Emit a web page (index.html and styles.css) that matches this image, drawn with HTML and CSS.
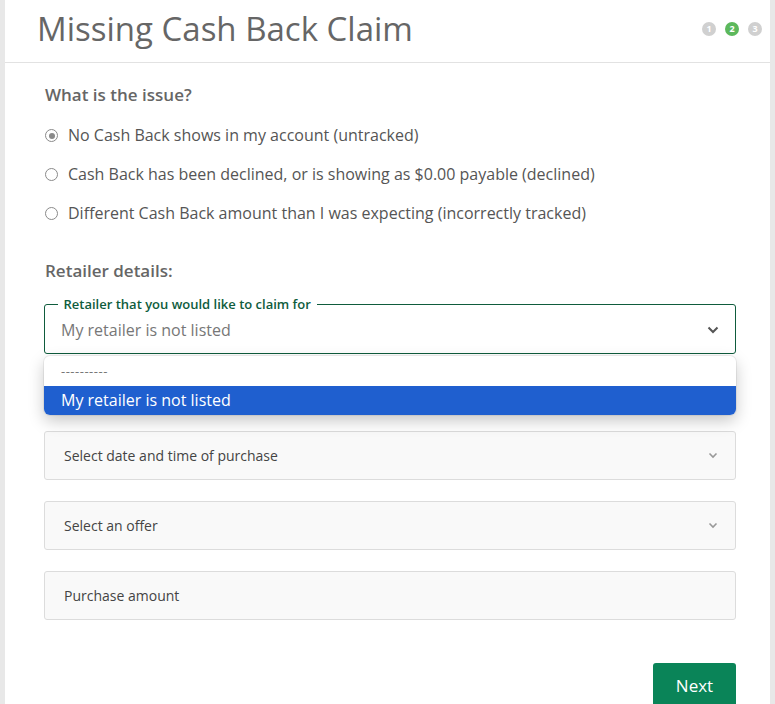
FILE: index.html
```html
<!DOCTYPE html>
<html lang="en">
<head>
  <meta charset="UTF-8" />
  <title>Missing Cash Back Claim</title>
  <link rel="stylesheet" href="styles.css">
</head>
<body>
  <div class="card">
    <header class="head">
      <h1>Missing Cash Back Claim</h1>
      <div class="steps">
        <span class="step">1</span>
        <span class="step active">2</span>
        <span class="step">3</span>
      </div>
    </header>

    <main class="body">
      <h2>What is the issue?</h2>
      <div class="radios">
        <label class="radio checked"><span class="dot"></span>No Cash Back shows in my account (untracked)</label>
        <label class="radio"><span class="dot"></span>Cash Back has been declined, or is showing as $0.00 payable (declined)</label>
        <label class="radio"><span class="dot"></span>Different Cash Back amount than I was expecting (incorrectly tracked)</label>
      </div>

      <h2 class="second">Retailer details:</h2>

      <div class="retailer">
        <fieldset class="outlined">
          <legend>Retailer that you would like to claim for</legend>
          <span class="value">My retailer is not listed</span>
          <svg class="chev" width="12" height="8" viewBox="0 0 12 8"><path d="M1.5 1.5 L6 6 L10.5 1.5" fill="none" stroke="#555" stroke-width="2"/></svg>
        </fieldset>
        <ul class="menu">
          <li>----------</li>
          <li class="sel">My retailer is not listed</li>
        </ul>
      </div>

      <div class="field">Select date and time of purchase
        <svg class="chev" width="10" height="7" viewBox="0 0 10 7"><path d="M1.5 1.5 L5 5 L8.5 1.5" fill="none" stroke="#999" stroke-width="1.6"/></svg>
      </div>
      <div class="field">Select an offer
        <svg class="chev" width="10" height="7" viewBox="0 0 10 7"><path d="M1.5 1.5 L5 5 L8.5 1.5" fill="none" stroke="#999" stroke-width="1.6"/></svg>
      </div>
      <div class="field">Purchase amount</div>

      <div class="actions">
        <button class="next">Next</button>
      </div>
    </main>
  </div>
</body>
</html>
```

FILE: styles.css
```css
html, body {
  margin: 0;
  padding: 0;
  background: #e8e8e8;
  font-family: "Open Sans", "Liberation Sans", sans-serif;
  color: #555;
}

.card {
  margin: 0 5px;
  background: #fff;
  min-height: 704px;
}

.head {
  display: flex;
  align-items: center;
  justify-content: space-between;
  height: 62px;
  padding: 0 8px 0 32px;
  border-bottom: 1px solid #e2e2e2;
}

.head h1 {
  margin: -6px 0 0 0;
  font-size: 33px;
  font-weight: 400;
  color: #666;
  letter-spacing: 0;
}

.steps {
  display: flex;
  gap: 9px;
  margin-top: -4px;
}

.step {
  width: 14px;
  height: 14px;
  border-radius: 50%;
  background: #d0d0d0;
  color: #fff;
  font-size: 9px;
  font-weight: 700;
  line-height: 14px;
  text-align: center;
}

.step.active {
  background: #5cb85c;
}

.body {
  padding: 20px 34px 0 39px;
}

h2 {
  margin: 0 0 0 1px;
  font-size: 17px;
  font-weight: 600;
  color: #666;
  line-height: 24px;
}

h2.second {
  margin-top: 34px;
}

.radios {
  display: flex;
  flex-direction: column;
  gap: 16px;
  margin-top: 17px;
}

.radio {
  display: flex;
  align-items: center;
  gap: 10px;
  font-size: 16px;
  color: #555;
  line-height: 23px;
  padding-left: 1px;
}

.dot {
  width: 11px;
  height: 11px;
  border: 1.5px solid #8a8a8a;
  border-radius: 50%;
  box-sizing: content-box;
  position: relative;
}

.radio.checked .dot::after {
  content: "";
  position: absolute;
  top: 2.5px;
  left: 2.5px;
  width: 6px;
  height: 6px;
  border-radius: 50%;
  background: #8a8a8a;
}

.retailer {
  position: relative;
  margin-top: 15px;
}

.outlined {
  margin: 0;
  height: 56px;
  box-sizing: border-box;
  border: 1.5px solid #0f5c3d;
  border-radius: 3px;
  padding: 0 16px 0 16px;
  display: flex;
  align-items: center;
  justify-content: space-between;
}

.outlined legend {
  font-size: 13px;
  font-weight: 600;
  color: #0f5c3d;
  padding: 0 6px;
  margin-left: -3.5px;
  line-height: 12px;
}

.outlined .value {
  font-size: 16px;
  color: #777;
  margin-top: -4px;
}

.outlined .chev {
  margin-top: -4px;
}

.menu {
  position: absolute;
  top: 58px;
  left: 0;
  right: 0;
  margin: 0;
  padding: 0;
  list-style: none;
  background: #fff;
  border-radius: 6px;
  box-shadow: 0 6px 16px rgba(0, 0, 0, 0.22), 0 0 0 1px rgba(0, 0, 0, 0.06);
  overflow: hidden;
  z-index: 2;
}

.menu li {
  height: 30px;
  line-height: 30px;
  padding: 0 17px;
  font-size: 16px;
  color: #777;
}

.menu li:first-child {
  font-size: 13px;
  letter-spacing: 0.5px;
}

.menu li.sel {
  background: #1f5fcf;
  color: #fff;
  height: 29px;
  line-height: 29px;
}

.field {
  display: flex;
  align-items: center;
  justify-content: space-between;
  height: 49px;
  box-sizing: border-box;
  margin-top: 21px;
  padding: 0 17px 0 19px;
  background: #f9f9f9;
  border: 1px solid #dcdcdc;
  border-radius: 3px;
  font-size: 14px;
  color: #444;
  font-stretch: 90%;
}

.retailer + .field {
  margin-top: 77px;
}

.actions {
  display: flex;
  justify-content: flex-end;
  margin-top: 43px;
}

.next {
  width: 83px;
  height: 44px;
  border: none;
  border-radius: 3px;
  background: #0a8458;
  color: #fff;
  font-family: "Open Sans", "Liberation Sans", sans-serif;
  font-size: 17px;
  padding: 0;
}
```
